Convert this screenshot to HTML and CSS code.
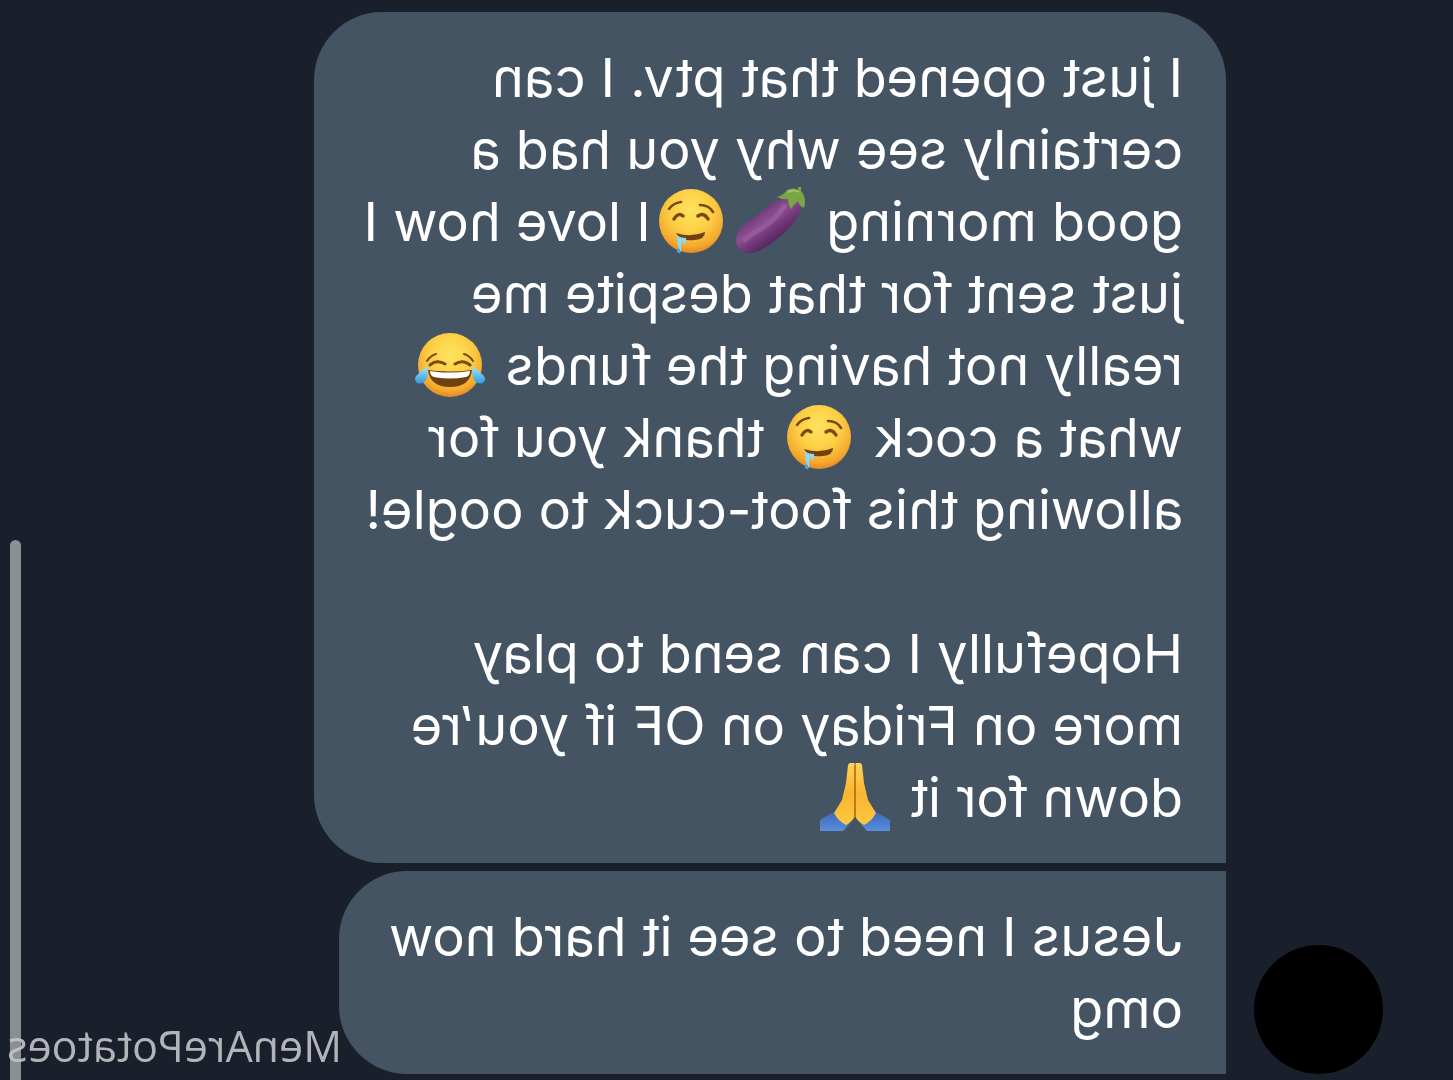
FILE: index.html
```html
<!DOCTYPE html>
<html lang="en">
<head>
<meta charset="utf-8">
<meta name="viewport" content="width=device-width, initial-scale=1">
<title>Messages</title>
<link rel="stylesheet" href="styles.css">
</head>
<body>
<svg class="defs" aria-hidden="true">
  <defs>
    <radialGradient id="skin" cx="50%" cy="34%" r="66%">
      <stop offset="0" stop-color="#ffe35e"/>
      <stop offset="0.5" stop-color="#fdcf45"/>
      <stop offset="0.85" stop-color="#f4a92f"/>
      <stop offset="1" stop-color="#e38a24"/>
    </radialGradient>
    <linearGradient id="tear" x1="0" y1="0" x2="0" y2="1">
      <stop offset="0" stop-color="#a5e6fb"/>
      <stop offset="1" stop-color="#2f9be0"/>
    </linearGradient>
    <linearGradient id="plum" x1="0.2" y1="0.2" x2="0.7" y2="0.8">
      <stop offset="0" stop-color="#5d2b63"/>
      <stop offset="0.45" stop-color="#8d4f92"/>
      <stop offset="0.65" stop-color="#74397b"/>
      <stop offset="1" stop-color="#46204f"/>
    </linearGradient>
    <linearGradient id="hand" x1="0" y1="0" x2="0" y2="1">
      <stop offset="0" stop-color="#ffd45c"/>
      <stop offset="0.5" stop-color="#f9b52f"/>
      <stop offset="1" stop-color="#fdc843"/>
    </linearGradient>
    <linearGradient id="sleeve" x1="0" y1="0" x2="0" y2="1">
      <stop offset="0" stop-color="#3a67b4"/>
      <stop offset="1" stop-color="#5a8ede"/>
    </linearGradient>
    <symbol id="drool" viewBox="-36 -34 72 68">
      <g transform="scale(-1 1)">
        <circle r="32" fill="url(#skin)"/>
        <g fill="none" stroke="#7a4a12" stroke-linecap="round">
          <path d="M-22 -12Q-18 -18 -10 -19M9 -16Q18 -16 22 -9" stroke-width="2.6"/>
          <path d="M-17 -2Q-13 -9 -8 -5M7 -5Q13 -9 17 -2" stroke-width="3.4"/>
        </g>
        <path d="M-15 12Q0 17 14 11Q14 18 4 19Q-10 21 -15 12Z" fill="#70400f"/>
        <path d="M-14 15Q-9 17 -5 17Q-4 20 -6 23Q-8 24 -8 20Q-9 20 -10 25Q-9 31 -12 32Q-15 31 -13 25Z" fill="#8fd8f2"/>
        <path d="M-13 26Q-9 30 -12 32Q-15 31 -13 26Z" fill="#3aa4df"/>
      </g>
    </symbol>
    <symbol id="joy" viewBox="-36 -34 72 68">
      <circle r="32" fill="url(#skin)"/>
      <g fill="none" stroke="#7a4a12" stroke-linecap="round">
        <path d="M-23 -4Q-20 -9 -14 -11M14 -11Q20 -9 23 -4" stroke-width="2"/>
        <path d="M-20 0Q-13 -6 -5 -1M5 -1Q13 -6 20 0" stroke-width="3"/>
      </g>
      <path d="M-22 5Q0 8 22 5Q20 22 0 22Q-20 22 -22 5Z" fill="#70400f"/>
      <path d="M-20 6Q0 9 20 6Q20 11 16 12Q0 15 -16 12Q-20 11 -20 6Z" fill="#fff"/>
      <path d="M-23 1Q-21 8 -24 15Q-28 20 -33 18Q-37 14 -33 10Z" fill="url(#tear)"/>
      <path d="M23 1Q21 8 24 15Q28 20 33 18Q37 14 33 10Z" fill="url(#tear)"/>
    </symbol>
    <symbol id="eggplant" viewBox="-36 -34 72 68">
      <g transform="scale(-1 1)">
        <path d="M12 -23C2 -20 -4 -14 -10 -9C-18 -1 -35 5 -35 18C-35 28 -28 33 -20 32C-8 30 4 20 15 10C22 3 29 -6 31 -16C29 -24 21 -27 12 -23Z" fill="url(#plum)"/>
        <path d="M13 -15Q6 -2 -10 8Q-20 13 -26 19" fill="none" stroke="#a568a8" stroke-width="5" stroke-linecap="round" opacity="0.5"/>
        <path d="M6 -24Q13 -26 16 -31Q22 -34 27 -31L27 -34L30 -34L30 -30Q36 -24 33 -13Q28 -15 27 -20Q22 -16 20 -12Q17 -17 17 -22Q12 -21 6 -24Z" fill="#79a843"/>
        <path d="M17 -29Q23 -32 28 -29" fill="none" stroke="#a1c763" stroke-width="2"/>
      </g>
    </symbol>
    <symbol id="pray" viewBox="-36 -34 72 68">
      <path d="M-35 34V23Q-27 18 -19 14L-5 26L-12 34ZM35 34V23Q27 18 19 14L5 26L12 34Z" fill="url(#sleeve)"/>
      <path d="M0 -33Q-4 -37 -7 -32L-9 -14L-13 3L-21 16Q-17 24 -9 28Q-2 24 0 19Q2 24 9 28Q17 24 21 16L13 3L9 -14L7 -32Q4 -37 0 -33Z" fill="url(#hand)"/>
      <path d="M0 -32V20" fill="none" stroke="#b06c0c" stroke-width="1.6" stroke-linecap="round"/>
    </symbol>
  </defs>
</svg>
<main class="chat">
  <div class="avatar" role="img" aria-label="Avatar"></div>
  <div class="messages">
    <p class="bubble bubble-first">I just opened that ptv. I can<br>certainly see why you had a<br>good morning <svg class="emoji" role="img" aria-label="eggplant"><use href="#eggplant"/></svg><svg class="emoji" role="img" aria-label="drooling face"><use href="#drool"/></svg>I love how I<br>just sent for that despite me<br>really not having the funds <svg class="emoji" role="img" aria-label="tears of joy"><use href="#joy"/></svg><br>what a cock <svg class="emoji" role="img" aria-label="drooling face"><use href="#drool"/></svg> thank you for<br>allowing this foot-cuck to oogle!<br><br>Hopefully I can send to play<br>more on Friday on OF if you’re<br>down for it <svg class="emoji" role="img" aria-label="folded hands"><use href="#pray"/></svg></p>
    <p class="bubble bubble-last">Jesus I need to see it hard now<br>omg</p>
  </div>
  <div class="scrollbar"></div>
  <div class="watermark">MenArePotatoes</div>
</main>
</body>
</html>
```
FILE: styles.css
```css
* {
  box-sizing: border-box;
}

body {
  margin: 0;
  background: #191f2b;
}

.defs {
  position: absolute;
  width: 0;
  height: 0;
}

/* The whole conversation is shown as a mirror image. */
.chat {
  position: relative;
  display: flex;
  align-items: flex-end;
  gap: 28px;
  min-height: 100vh;
  padding: 12px 70px 6px;
  overflow: hidden;
  color: #fff;
  font-family: Inter, "Liberation Sans", sans-serif;
  font-size: 54px;
  line-height: 72px;
  transform: scaleX(-1);
}

.avatar {
  flex: none;
  width: 129px;
  height: 129px;
  border-radius: 50%;
  background: #000;
}

.messages {
  display: flex;
  flex-direction: column;
  align-items: flex-start;
  gap: 8px;
}

.bubble {
  margin: 0;
  padding: 30px 50px 29px 43px;
  background: #445462;
  white-space: nowrap;
}

.bubble-first {
  border-radius: 68px 68px 68px 0;
}

.bubble-last {
  border-radius: 0 68px 68px 0;
}

.emoji {
  width: 72px;
  height: 68px;
  margin: 0 4px;
  vertical-align: -14px;
}

.scrollbar {
  position: absolute;
  top: 50%;
  right: 10px;
  bottom: -10px;
  width: 11px;
  border-radius: 6px;
  background: #8b8f94;
}

.watermark {
  position: absolute;
  right: 7px;
  bottom: 6px;
  color: #c4c5c7;
  font-family: "Open Sans", "Noto Sans", sans-serif;
  font-size: 43px;
  line-height: 56px;
  opacity: 0.9;
}
```
